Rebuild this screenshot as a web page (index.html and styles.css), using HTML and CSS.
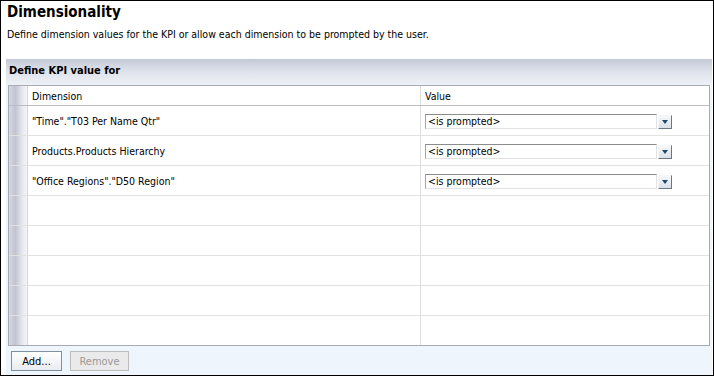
FILE: index.html
```html
<!DOCTYPE html>
<html lang="en">
<head>
  <meta charset="UTF-8" />
  <title>Dimensionality</title>
  <link rel="stylesheet" href="styles.css">
</head>
<body>

<div class="frame">
  <h1>Dimensionality</h1>
  <p class="intro">Define dimension values for the KPI or allow each dimension to be prompted by the user.</p>

  <div class="panel">
    <div class="panel-head">Define KPI value for</div>

    <div class="grid">
      <div class="row head">
        <div class="gutter"></div>
        <div class="cell">Dimension</div>
        <div class="cell">Value</div>
      </div>

      <div class="row">
        <div class="gutter"></div>
        <div class="cell">"Time"."T03 Per Name Qtr"</div>
        <div class="cell">
          <div class="combo"><span class="combo-text">&lt;is prompted&gt;</span><span class="combo-btn"></span></div>
        </div>
      </div>

      <div class="row">
        <div class="gutter"></div>
        <div class="cell">Products.Products Hierarchy</div>
        <div class="cell">
          <div class="combo"><span class="combo-text">&lt;is prompted&gt;</span><span class="combo-btn"></span></div>
        </div>
      </div>

      <div class="row">
        <div class="gutter"></div>
        <div class="cell">"Office Regions"."D50 Region"</div>
        <div class="cell">
          <div class="combo"><span class="combo-text">&lt;is prompted&gt;</span><span class="combo-btn"></span></div>
        </div>
      </div>

      <div class="row"><div class="gutter"></div><div class="cell"></div><div class="cell"></div></div>
      <div class="row"><div class="gutter"></div><div class="cell"></div><div class="cell"></div></div>
      <div class="row"><div class="gutter"></div><div class="cell"></div><div class="cell"></div></div>
      <div class="row"><div class="gutter"></div><div class="cell"></div><div class="cell"></div></div>
      <div class="row last"><div class="gutter"></div><div class="cell"></div><div class="cell"></div></div>
    </div>

    <div class="actions">
      <button class="btn">Add...</button>
      <button class="btn" disabled>Remove</button>
    </div>
  </div>
</div>

</body>
</html>
```

FILE: styles.css
```css
body {
  margin: 0;
  font-family: "DejaVu Sans Condensed", "DejaVu Sans", sans-serif;
  font-size: 10.5px;
  color: #000;
  background: #fff;
}

.frame {
  width: 714px;
  height: 376px;
  box-sizing: border-box;
  border: 1px solid #000;
  display: flex;
  flex-direction: column;
  overflow: hidden;
}

h1 {
  margin: 0;
  padding: 2px 0 0 6px;
  font-size: 15px;
  line-height: 18px;
  font-weight: bold;
}

.intro {
  margin: 0;
  padding: 7px 0 0 6px;
  line-height: 13px;
}

.panel {
  flex: 1;
  margin: 18px 1px 0 5px;
  background: #eef5fc;
  display: flex;
  flex-direction: column;
}

.panel-head {
  height: 26px;
  line-height: 24px;
  padding-left: 3px;
  font-weight: bold;
  font-size: 11px;
  background: linear-gradient(to bottom, #c3c9d6 0%, #dde1ea 45%, #eef1f6 100%);
}

.grid {
  margin: 0 2px 0 2px;
  border: 1px solid #a7acb4;
  background: #fff;
}

.row {
  display: grid;
  grid-template-columns: 19px 392px 1fr;
  height: 30px;
  box-sizing: border-box;
  border-bottom: 1px solid #e2e2e2;
}

.row.head {
  height: 20px;
  border-bottom: 1px solid #b9bdc3;
}

.row.last {
  border-bottom: none;
  height: 29px;
}

.gutter {
  border-right: 1px solid #d6d6d6;
  background: linear-gradient(to right, #d9d9e4 0%, #c2c2d2 35%, #e4e4ec 70%, #f6f6f9 100%);
}

.cell {
  display: flex;
  align-items: center;
  padding-left: 4px;
  white-space: nowrap;
}

.cell + .cell {
  border-left: 1px solid #dcdcdc;
}

.combo {
  display: flex;
  align-items: flex-end;
  gap: 1px;
  margin-top: 2px;
}

.combo-text {
  height: 15px;
  line-height: 13px;
  padding-left: 2px;
  box-sizing: border-box;
  width: 232px;
  border-top: 1px solid #8c8c8c;
  border-left: 1px solid #a4a4a4;
  border-bottom: 1px solid #e2e2e2;
  border-right: 1px solid #e2e2e2;
  background: #fff;
}

.combo-btn {
  position: relative;
  width: 14px;
  height: 14px;
  box-sizing: border-box;
  border-right: 1px solid #6b7684;
  border-bottom: 1px solid #6b7684;
  border-top: 1px solid #f4f6f8;
  border-left: 1px solid #f4f6f8;
  background: linear-gradient(to bottom, #f7f9fb, #d9e0e7);
}

.combo-btn::after {
  content: "";
  position: absolute;
  left: 3px;
  top: 4px;
  border-left: 3px solid transparent;
  border-right: 3px solid transparent;
  border-top: 4px solid #1d4a6b;
}

.actions {
  display: flex;
  gap: 8px;
  padding: 5px 0 0 5px;
}

.btn {
  height: 20px;
  padding: 0 8px;
  font-family: inherit;
  font-size: 11px;
  color: #000;
  border: 1px solid #8190a0;
  background: linear-gradient(to bottom, #ffffff, #e9ecf0);
  border-radius: 0;
}

.btn:first-child {
  width: 51px;
}

.btn:disabled {
  width: 59px;
  color: #999;
  border-color: #bcbcbc;
  background: #eaeaea;
}
```
